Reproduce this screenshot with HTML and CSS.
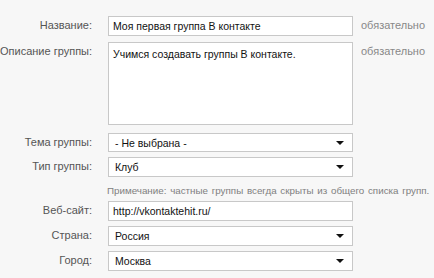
FILE: index.html
```html
<!DOCTYPE html>
<html lang="ru">
<head>
<meta charset="utf-8">
<link rel="stylesheet" href="styles.css">
</head>
<body>
<form class="form">
  <div class="row r-name">
    <label class="label">Название:</label>
    <div class="field input">Моя первая группа В контакте</div>
    <span class="hint">обязательно</span>
  </div>
  <div class="row r-desc">
    <label class="label">Описание группы:</label>
    <div class="field textarea">Учимся создавать группы В контакте.</div>
    <span class="hint">обязательно</span>
  </div>
  <div class="row r-theme">
    <label class="label">Тема группы:</label>
    <div class="field select">- Не выбрана -<span class="arrow"></span></div>
  </div>
  <div class="row r-type">
    <label class="label">Тип группы:</label>
    <div class="field select">Клуб<span class="arrow"></span></div>
  </div>
  <div class="row r-note">
    <span class="label"></span>
    <span class="note">Примечание: частные группы всегда скрыты из общего списка групп.</span>
  </div>
  <div class="row r-site">
    <label class="label">Веб-сайт:</label>
    <div class="field input">http://vkontaktehit.ru/</div>
  </div>
  <div class="row r-country">
    <label class="label">Страна:</label>
    <div class="field select">Россия<span class="arrow"></span></div>
  </div>
  <div class="row r-city">
    <label class="label">Город:</label>
    <div class="field select">Москва<span class="arrow"></span></div>
  </div>
</form>
</body>
</html>
```
FILE: styles.css
```css
html, body {
  margin: 0;
  padding: 0;
  background: #f7f7f7;
}
body {
  font-family: "Liberation Sans", Arial, sans-serif;
  font-size: 11px;
  color: #000;
}
.form {
  display: flex;
  flex-direction: column;
  padding-top: 16px;
}
.row {
  display: flex;
  align-items: flex-start;
  white-space: nowrap;
}
.label {
  width: 92px;
  flex: none;
  text-align: right;
  color: #555;
  padding-top: 3px;
  margin-right: 16px;
}
.field {
  box-sizing: border-box;
  width: 245px;
  flex: none;
  background: #fff;
  border: 1px solid #c8c8c8;
  padding: 3px 4px 0 4px;
  position: relative;
  font-size: 10.5px;
  color: #111;
}
.input, .select { height: 20px; }
.select { padding-left: 6px; }
.textarea { height: 83px; padding-top: 5px; }
.hint {
  margin-left: 8px;
  padding-top: 3px;
  color: #888;
}
.arrow {
  position: absolute;
  right: 8px;
  top: 7px;
  width: 0;
  height: 0;
  border-left: 4px solid transparent;
  border-right: 4px solid transparent;
  border-top: 4px solid #111;
}
.r-name { margin-bottom: 6px; }
.r-desc { margin-bottom: 8px; }
.r-theme { margin-bottom: 5px; }
.r-theme .field { height: 19px; }
.r-note { height: 24px; align-items: center; }
.note {
  color: #808080;
  font-size: 9.8px;
  word-spacing: 1px;
  margin-left: -1px;
  padding-top: 2px;
}
.r-note .label { padding-top: 0; }
.r-site, .r-country { margin-bottom: 5px; }
```
